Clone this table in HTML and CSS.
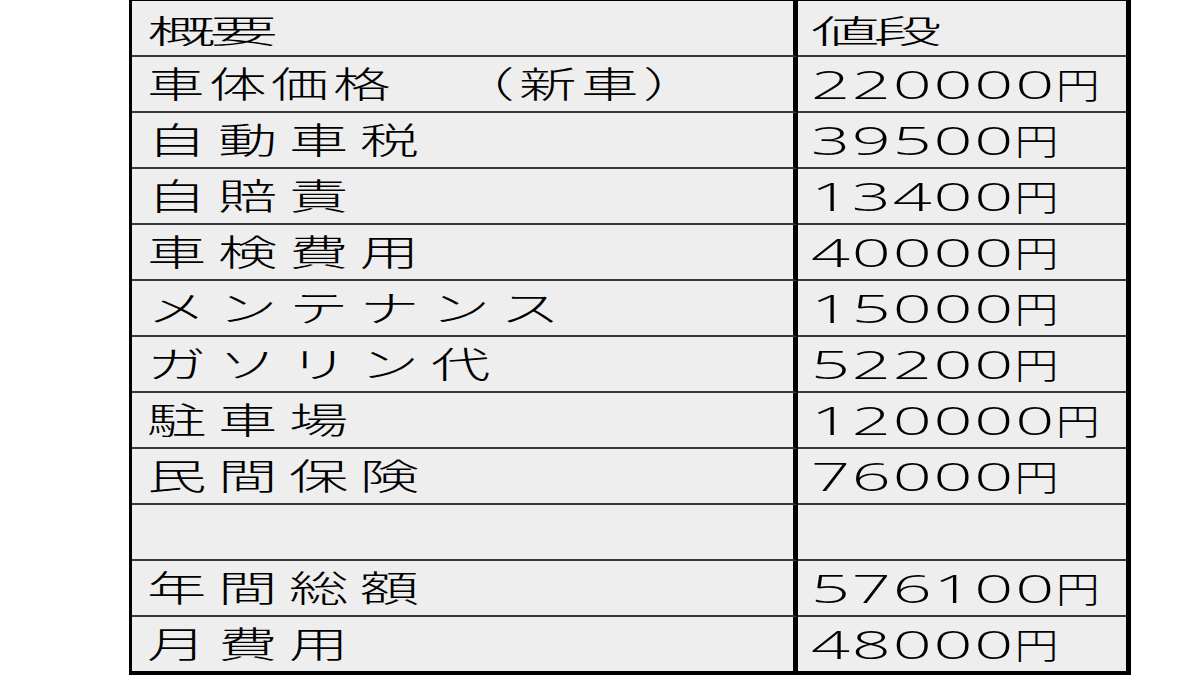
FILE: index.html
```html
<!DOCTYPE html>
<html lang="ja">
<head>
<meta charset="utf-8">
<title>年間費用</title>
<link rel="stylesheet" href="styles.css">
</head>
<body>
<table class="cost">
  <tr class="head">
    <td class="label"><span class="jp jp-head">概要</span></td>
    <td class="value"><span class="jp jp-head">値段</span></td>
  </tr>
  <tr>
    <td class="label"><span class="jp jp-tight">車体価格　（新車）</span></td>
    <td class="value"><span class="num">220000<span class="yen">円</span></span></td>
  </tr>
  <tr>
    <td class="label"><span class="jp">自動車税</span></td>
    <td class="value"><span class="num">39500<span class="yen">円</span></span></td>
  </tr>
  <tr>
    <td class="label"><span class="jp">自賠責</span></td>
    <td class="value"><span class="num">13400<span class="yen">円</span></span></td>
  </tr>
  <tr>
    <td class="label"><span class="jp">車検費用</span></td>
    <td class="value"><span class="num">40000<span class="yen">円</span></span></td>
  </tr>
  <tr>
    <td class="label"><span class="jp">メンテナンス</span></td>
    <td class="value"><span class="num">15000<span class="yen">円</span></span></td>
  </tr>
  <tr>
    <td class="label"><span class="jp">ガソリン代</span></td>
    <td class="value"><span class="num">52200<span class="yen">円</span></span></td>
  </tr>
  <tr>
    <td class="label"><span class="jp">駐車場</span></td>
    <td class="value"><span class="num">120000<span class="yen">円</span></span></td>
  </tr>
  <tr>
    <td class="label"><span class="jp">民間保険</span></td>
    <td class="value"><span class="num">76000<span class="yen">円</span></span></td>
  </tr>
  <tr>
    <td class="label"></td>
    <td class="value"></td>
  </tr>
  <tr>
    <td class="label"><span class="jp">年間総額</span></td>
    <td class="value"><span class="num">576100<span class="yen">円</span></span></td>
  </tr>
  <tr class="last">
    <td class="label"><span class="jp">月費用</span></td>
    <td class="value"><span class="num">48000<span class="yen">円</span></span></td>
  </tr>
</table>
</body>
</html>
```
FILE: styles.css
```css
html, body {
  margin: 0;
  padding: 0;
  background: #ffffff;
}

body {
  width: 1200px;
  height: 675px;
  overflow: hidden;
}

.cost {
  margin-left: 129px;
  border-collapse: separate;
  border-spacing: 0;
  border-top: 1px solid #000;
  border-left: 3px solid #000;
  border-right: 5px solid #000;
  border-bottom: 2px solid #000;
  background: #eeeeee;
  color: #000;
  table-layout: fixed;
}

.cost td {
  height: 54px;
  padding: 0;
  border-bottom: 2px solid #3a3a3a;
  vertical-align: top;
  white-space: nowrap;
  overflow: hidden;
  line-height: 0;
}

.cost tr.last td {
  border-bottom: 2px solid #000;
}

.label {
  width: 646px;
  padding-left: 15px !important;
  border-right: 5px solid #000;
}

.value {
  width: 315px;
  padding-left: 13px !important;
}

.jp {
  display: block;
  height: 54px;
  line-height: 51px;
  font-family: "Noto Sans CJK JP", "Noto Sans", sans-serif;
  font-weight: 300;
  font-size: 36px;
  letter-spacing: 7px;
  text-spacing-trim: space-all;
  font-feature-settings: "halt" 0, "palt" 0;
  transform: scaleX(1.65);
  transform-origin: left center;
}

.jp-tight {
  letter-spacing: 2.75px;
  transform: scaleX(1.6);
}

.jp-head {
  font-size: 32px;
  line-height: 56px;
  letter-spacing: -3px;
  transform: scaleX(2.15);
}

.num {
  display: block;
  height: 54px;
  line-height: 52px;
  font-family: "Open Sans", "Liberation Sans", Arial, sans-serif;
  font-weight: 300;
  font-size: 38px;
  letter-spacing: 1px;
  transform: scaleX(1.8);
  transform-origin: left center;
}

.yen {
  display: inline-block;
  font-family: "Noto Sans CJK JP", sans-serif;
  font-weight: 300;
  font-size: 36px;
  letter-spacing: 0;
  transform: scaleX(0.68);
  transform-origin: left center;
}
```
